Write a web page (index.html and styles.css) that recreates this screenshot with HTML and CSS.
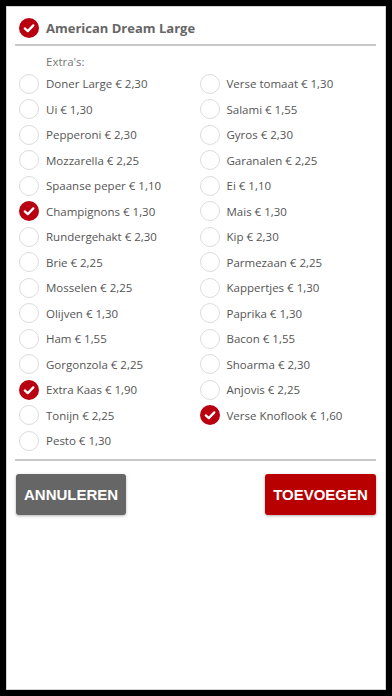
FILE: index.html
```html
<!DOCTYPE html>
<html lang="nl">
<head>
<meta charset="utf-8">
<title>American Dream Large</title>
<link rel="stylesheet" href="styles.css">
</head>
<body>
<div class="panel">
  <div class="header">
    <span class="radio checked"><svg viewBox="0 0 20 20" width="20" height="20"><circle cx="10" cy="10" r="10" fill="#b80010"/><path d="M5.8 10.4 L8.8 13.1 L14.3 7.4" fill="none" stroke="#fff" stroke-width="2.3" stroke-linecap="round" stroke-linejoin="round"/></svg></span>
    <h1 class="title">American Dream Large</h1>
  </div>
  <div class="divider"></div>
  <div class="label">Extra's:</div>
  <div class="grid">
    <ul class="col">
      <li class="item"><span class="radio"></span>Doner Large € 2,30</li>
      <li class="item"><span class="radio"></span>Ui € 1,30</li>
      <li class="item"><span class="radio"></span>Pepperoni € 2,30</li>
      <li class="item"><span class="radio"></span>Mozzarella € 2,25</li>
      <li class="item"><span class="radio"></span>Spaanse peper € 1,10</li>
      <li class="item"><span class="radio checked"><svg viewBox="0 0 20 20" width="20" height="20"><circle cx="10" cy="10" r="10" fill="#b80010"/><path d="M5.8 10.4 L8.8 13.1 L14.3 7.4" fill="none" stroke="#fff" stroke-width="2.3" stroke-linecap="round" stroke-linejoin="round"/></svg></span>Champignons € 1,30</li>
      <li class="item"><span class="radio"></span>Rundergehakt € 2,30</li>
      <li class="item"><span class="radio"></span>Brie € 2,25</li>
      <li class="item"><span class="radio"></span>Mosselen € 2,25</li>
      <li class="item"><span class="radio"></span>Olijven € 1,30</li>
      <li class="item"><span class="radio"></span>Ham € 1,55</li>
      <li class="item"><span class="radio"></span>Gorgonzola € 2,25</li>
      <li class="item"><span class="radio checked"><svg viewBox="0 0 20 20" width="20" height="20"><circle cx="10" cy="10" r="10" fill="#b80010"/><path d="M5.8 10.4 L8.8 13.1 L14.3 7.4" fill="none" stroke="#fff" stroke-width="2.3" stroke-linecap="round" stroke-linejoin="round"/></svg></span>Extra Kaas € 1,90</li>
      <li class="item"><span class="radio"></span>Tonijn € 2,25</li>
      <li class="item"><span class="radio"></span>Pesto € 1,30</li>
    </ul>
    <ul class="col">
      <li class="item"><span class="radio"></span>Verse tomaat € 1,30</li>
      <li class="item"><span class="radio"></span>Salami € 1,55</li>
      <li class="item"><span class="radio"></span>Gyros € 2,30</li>
      <li class="item"><span class="radio"></span>Garanalen € 2,25</li>
      <li class="item"><span class="radio"></span>Ei € 1,10</li>
      <li class="item"><span class="radio"></span>Mais € 1,30</li>
      <li class="item"><span class="radio"></span>Kip € 2,30</li>
      <li class="item"><span class="radio"></span>Parmezaan € 2,25</li>
      <li class="item"><span class="radio"></span>Kappertjes € 1,30</li>
      <li class="item"><span class="radio"></span>Paprika € 1,30</li>
      <li class="item"><span class="radio"></span>Bacon € 1,55</li>
      <li class="item"><span class="radio"></span>Shoarma € 2,30</li>
      <li class="item"><span class="radio"></span>Anjovis € 2,25</li>
      <li class="item"><span class="radio checked"><svg viewBox="0 0 20 20" width="20" height="20"><circle cx="10" cy="10" r="10" fill="#b80010"/><path d="M5.8 10.4 L8.8 13.1 L14.3 7.4" fill="none" stroke="#fff" stroke-width="2.3" stroke-linecap="round" stroke-linejoin="round"/></svg></span>Verse Knoflook € 1,60</li>
    </ul>
  </div>
  <div class="divider bottom"></div>
  <div class="actions">
    <button class="btn cancel">ANNULEREN</button>
    <button class="btn add">TOEVOEGEN</button>
  </div>
</div>
</body>
</html>
```
FILE: styles.css
```css
* { box-sizing: border-box; }
html, body {
  margin: 0;
  padding: 0;
  background: #000;
}
body {
  padding: 6px;
  font-family: "Open Sans", "Noto Sans", sans-serif;
}
.panel {
  width: 380px;
  height: 684px;
  background: #fff;
  border: 1px solid #d4d4d4;
  padding: 0 9px 0 8px;
}
.header {
  display: flex;
  align-items: center;
  height: 37px;
  padding-top: 5px;
}
.radio {
  flex: none;
  width: 20px;
  height: 20px;
  border-radius: 50%;
  border: 1px solid #dcdcdc;
  margin: 0 7px 0 4px;
  display: inline-block;
}
.radio.checked {
  border: none;
}
.radio svg { display: block; }
.title {
  margin: 0;
  font-size: 13px;
  font-weight: 700;
  color: #666;
  line-height: 20px;
}
.divider {
  height: 2px;
  background: #c8c8c8;
}
.label {
  margin-top: 7px;
  padding-left: 31px;
  font-size: 11.5px;
  line-height: 18px;
  color: #777;
}
.grid {
  display: grid;
  grid-template-columns: 1fr 1fr;
}
.col {
  list-style: none;
  margin: 0;
  padding: 0;
}
.item {
  display: flex;
  align-items: center;
  height: 25.5px;
  font-size: 11.5px;
  color: #555;
  white-space: nowrap;
}
.divider.bottom {
  margin-top: 5.5px;
}
.actions {
  display: flex;
  justify-content: space-between;
  margin-top: 13px;
  padding-left: 1px;
}
.btn {
  height: 41px;
  padding: 0 8px;
  border: none;
  border-radius: 3px;
  color: #fff;
  font-family: "Liberation Sans", Arial, sans-serif;
  font-weight: 700;
  font-size: 15px;
  box-shadow: 0 1px 3px rgba(0,0,0,0.3);
}
.btn.cancel {
  width: 110px;
  background: #666;
}
.btn.add {
  width: 111px;
  background: #b80000;
}
```
